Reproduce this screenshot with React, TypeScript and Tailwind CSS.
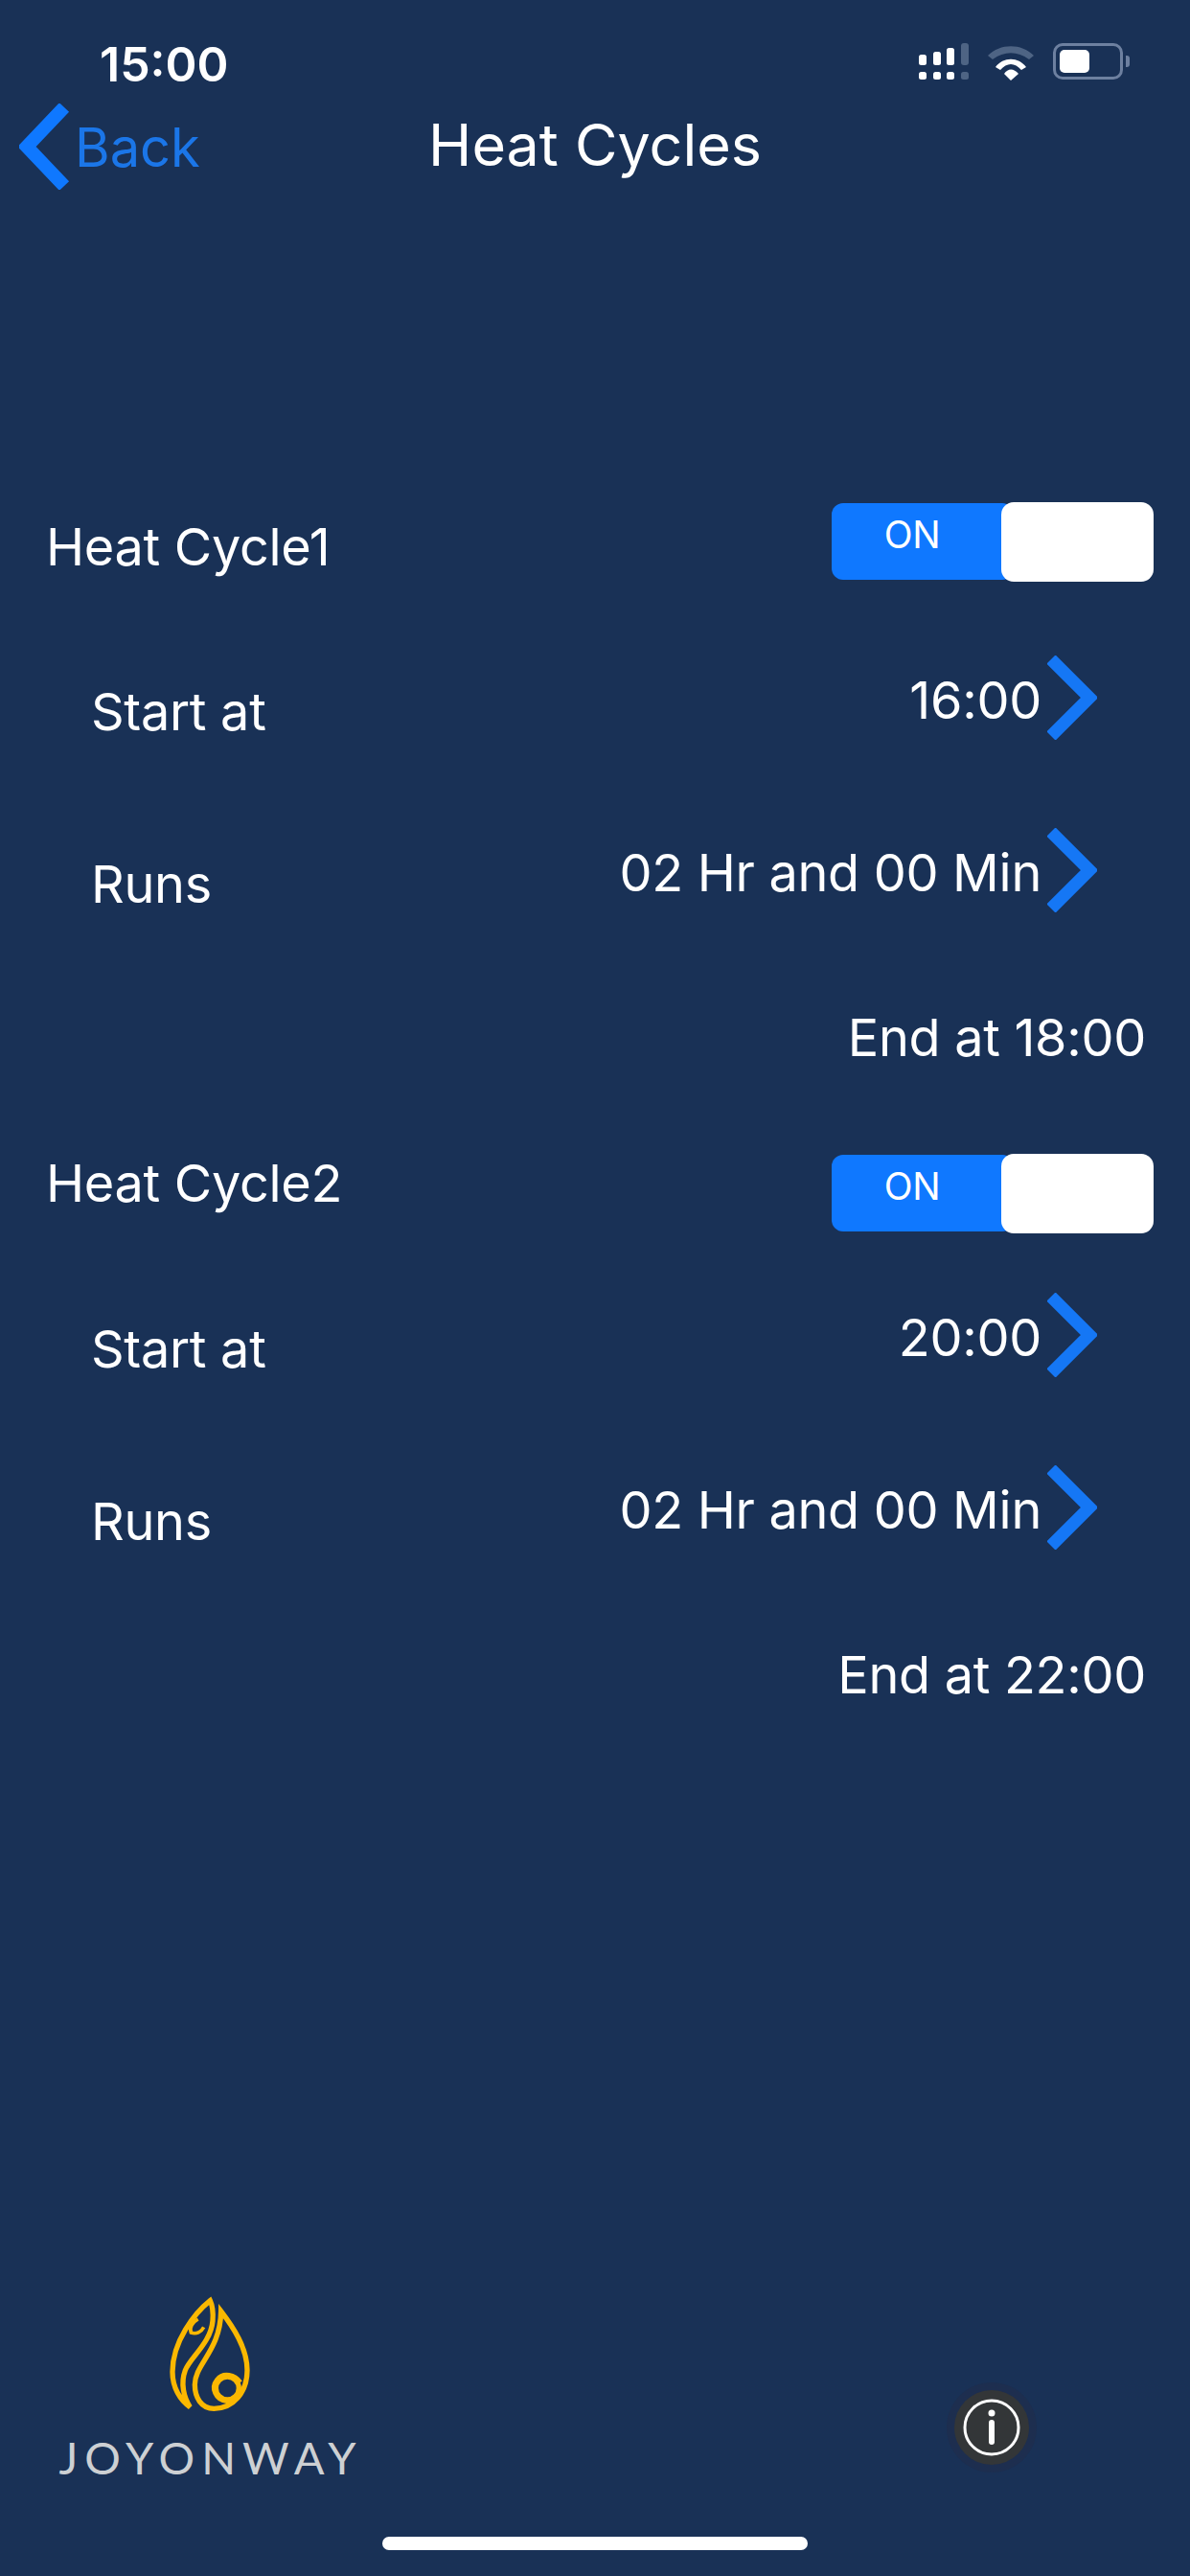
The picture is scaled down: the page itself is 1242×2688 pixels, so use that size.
const FONT = "font-['Inter',sans-serif]";

function StatusIcons() {
  return (
    <div className="flex items-start gap-[19px] pt-[45px]">
      {/* signal dots */}
      <svg width="52" height="40" viewBox="0 0 52 40">
        <rect x="0" y="12" width="8" height="11" rx="2.5" fill="#fff" />
        <rect x="15" y="9" width="8" height="14" rx="2.5" fill="#fff" />
        <rect x="29" y="5" width="8" height="18" rx="2.5" fill="#fff" />
        <rect x="44" y="0" width="8" height="23" rx="3" fill="#4e6484" />
        <rect x="0" y="30" width="8" height="8" rx="2.5" fill="#fff" />
        <rect x="15" y="30" width="8" height="8" rx="2.5" fill="#fff" />
        <rect x="29" y="30" width="8" height="8" rx="2.5" fill="#fff" />
        <rect x="44" y="30" width="8" height="8" rx="2.5" fill="#4e6484" />
      </svg>
      {/* wifi */}
      <svg width="50" height="38" viewBox="0 0 50 38" className="mt-[2px]">
        <path d="M1 11 C14 -2 36 -2 49 11 L44 15 C32 6 18 6 6 15 Z" fill="#4e6484" />
        <path d="M9 23 C17 12 33 12 41 23 L36 26 C29 18 21 18 14 26 Z" fill="#fff" />
        <path d="M18 30 C22 24 28 24 33 30 L25 37 Z" fill="#fff" />
      </svg>
      {/* battery */}
      <div className="flex items-center">
        <div className="flex h-[38px] w-[73px] rounded-[10px] border-[3px] border-[#6d80a0] p-[4px]">
          <div className="h-full w-[31px] rounded-[5px] bg-white" />
        </div>
        <div className="ml-[3px] h-[12px] w-[4px] rounded-r-[3px] bg-[#6d80a0]" />
      </div>
    </div>
  );
}

function OnSwitch({ className }: { className: string }) {
  return (
    <div className={`flex ${className}`}>
      <div className="my-px h-[80px] w-[190px] rounded-[12px] bg-[#0f78ff] text-white">
        <div className="w-[168px] pt-[11px] text-center text-[39px] leading-[44px]">ON</div>
      </div>
      <div className="-ml-[13px] h-[83px] w-[159px] rounded-[13px] bg-white" />
    </div>
  );
}

function Chevron() {
  return (
    <svg width="52" height="88" viewBox="0 0 52 88" className="ml-[6px] shrink-0">
      <polyline points="4,4 44,44 4,84" fill="none" stroke="#1577f5" strokeWidth="13" />
    </svg>
  );
}

function ValueRow({ label, value, height }: { label: string; value: string; height: string }) {
  return (
    <div className={`flex items-start justify-between pl-[47px] pr-[59px] ${height}`}>
      <span className="mt-[27px] leading-[64px]">{label}</span>
      <div className="flex items-start">
        <span className="mt-[15px] leading-[64px]">{value}</span>
        <Chevron />
      </div>
    </div>
  );
}

function HeatCycle(props: { title: string; start: string; end: string; switchClass: string; labelClass: string }) {
  return (
    <section className="h-[665px] text-[54px] tracking-[-0.3px] text-white">
      <div className="flex h-[160px] items-start justify-between">
        <span className={`leading-[64px] ${props.labelClass}`}>{props.title}</span>
        <OnSwitch className={props.switchClass} />
      </div>
      <ValueRow label="Start at" value={props.start} height="h-[180px]" />
      <ValueRow label="Runs" value="02 Hr and 00 Min" height="h-[176px]" />
      <div className="mt-[11px] pr-[8px] text-right leading-[64px]">End at {props.end}</div>
    </section>
  );
}

function Logo() {
  return (
    <div className="flex w-[313px] flex-col items-center">
      <svg width="84" height="120" viewBox="442 108 250 360" fill="none" stroke="#fbb800" strokeWidth="16">
        <path d="M568 122 C520 160 450 250 450 345 C450 395 475 435 505 455 C485 425 475 380 490 340 C505 300 570 255 576 185 C578 160 574 135 568 122 Z" />
        <path d="M530 180 C512 190 502 207 508 222 C525 228 540 220 548 205" strokeWidth="11" />
        <path d="M602 155 C640 205 684 270 684 340 C684 410 640 460 580 460 C540 460 520 425 520 385 C520 320 600 280 602 155 Z" />
        <path d="M662 378 C645 355 610 345 590 370 C570 395 585 432 620 436 C640 438 650 430 656 420" />
        <circle cx="622" cy="396" r="36" />
      </svg>
      <div className="mt-[29px] ml-[3px] font-['Lato',sans-serif] text-[47px] leading-[38px] tracking-[7px] whitespace-nowrap text-[#cdd0d3]">
        JOYONWAY
      </div>
    </div>
  );
}

function InfoButton() {
  return (
    <div className="flex h-[94px] w-[94px] items-center justify-center rounded-full bg-[#1d2e4f]">
      <div className="flex h-[78px] w-[78px] items-center justify-center rounded-full bg-[#333638]">
        <svg width="60" height="60" viewBox="0 0 60 60" fill="none" stroke="#fff">
          <circle cx="30" cy="30" r="28" strokeWidth="3" />
          <line x1="30" y1="25" x2="30" y2="45" strokeWidth="6" strokeLinecap="round" />
          <circle cx="30" cy="15" r="3.5" fill="#fff" stroke="none" />
        </svg>
      </div>
    </div>
  );
}

export default function App() {
  return (
    <div className={`flex h-[2688px] w-[1242px] flex-col overflow-hidden bg-[#193156] ${FONT}`}>
      {/* status bar */}
      <div className="flex h-[100px] justify-between pl-[104px] pr-[63px] text-white">
        <span className="mt-[39px] text-[50px] leading-[56px] font-semibold">15:00</span>
        <StatusIcons />
      </div>

      {/* nav bar */}
      <div className="grid h-[100px] grid-cols-[1fr_auto_1fr] px-[20px]">
        <div className="flex items-start">
          <svg width="54" height="90" viewBox="0 0 54 90" className="mt-[8px]">
            <polyline points="47,4 8,45 47,86" fill="none" stroke="#0f78ff" strokeWidth="14" />
          </svg>
          <span className="mt-[21px] ml-[4px] text-[56px] leading-[66px] text-[#1b76e8]">Back</span>
        </div>
        <h1 className="mt-[15px] text-[61px] leading-[72px] font-normal text-white">Heat Cycles</h1>
        <div />
      </div>

      <main className="mt-[324px] pl-[48px] pr-[38px]">
        <HeatCycle title="Heat Cycle1" start="16:00" end="18:00" switchClass="" labelClass="mt-[15px]" />
        <HeatCycle title="Heat Cycle2" start="20:00" end="22:00" switchClass="mt-[15px]" labelClass="mt-[14px]" />
      </main>

      <footer className="mt-auto flex items-start justify-between pl-[62px] pr-[160px]">
        <Logo />
        <div className="mt-[90px]">
          <InfoButton />
        </div>
      </footer>

      {/* home indicator */}
      <div className="mt-[64px] mb-[27px] flex justify-center">
        <div className="h-[14px] w-[444px] rounded-full bg-white" />
      </div>
    </div>
  );
}
